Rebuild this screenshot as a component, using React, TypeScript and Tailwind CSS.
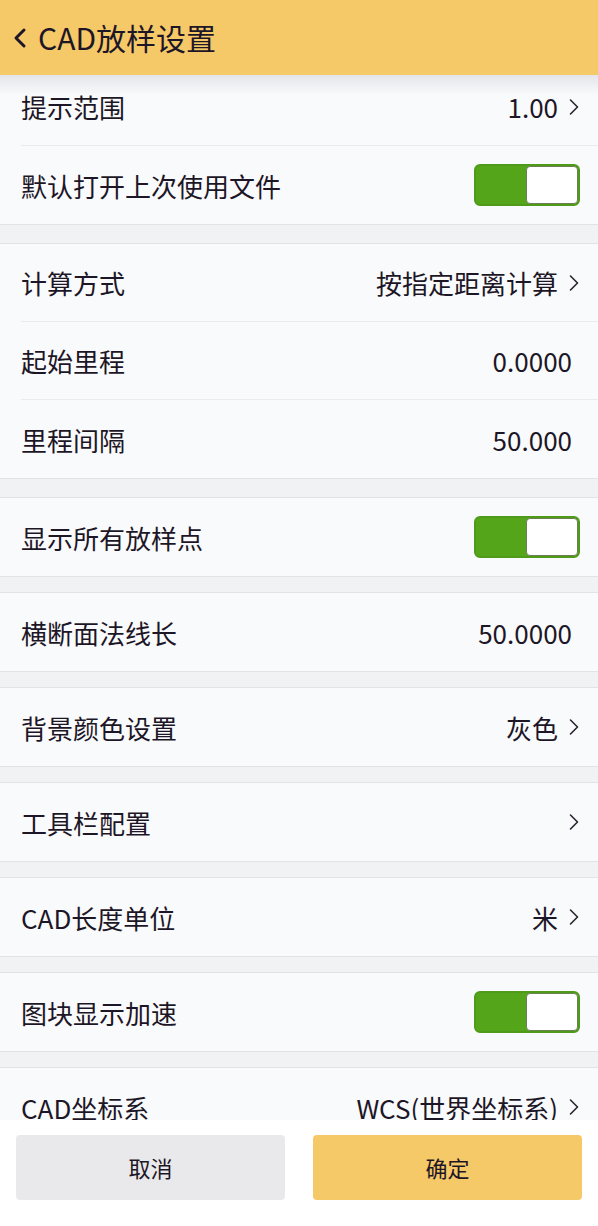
import React from "react";

type Row = {
  label: string;
  value?: string;
  arrow?: boolean;
  toggle?: boolean;
};

const groups: Row[][] = [
  [
    { label: "提示范围", value: "1.00", arrow: true },
    { label: "默认打开上次使用文件", toggle: true },
  ],
  [
    { label: "计算方式", value: "按指定距离计算", arrow: true },
    { label: "起始里程", value: "0.0000" },
    { label: "里程间隔", value: "50.000" },
  ],
  [{ label: "显示所有放样点", toggle: true }],
  [{ label: "横断面法线长", value: "50.0000" }],
  [{ label: "背景颜色设置", value: "灰色", arrow: true }],
  [{ label: "工具栏配置", arrow: true }],
  [{ label: "CAD长度单位", value: "米", arrow: true }],
  [{ label: "图块显示加速", toggle: true }],
  [{ label: "CAD坐标系", value: "WCS(世界坐标系)", arrow: true }],
];

// spacing above each group
const gapClass = ["", "mt-[18px]", "mt-[18px]", "mt-[15px]", "mt-[15px]", "mt-[15px]", "mt-[15px]", "mt-[15px]", "mt-[15px]"];

function Chevron() {
  return (
    <svg width="12" height="18" viewBox="0 0 12 18" className="ml-[10px] shrink-0">
      <path d="M2.5 2 L9.5 9 L2.5 16" fill="none" stroke="#2a2430" strokeWidth="1.6" strokeLinecap="round" strokeLinejoin="round" />
    </svg>
  );
}

function Toggle() {
  return (
    <div className="flex h-[42px] w-[106px] overflow-hidden rounded-[6px] border-2 border-[#4f9a18] bg-[#54a51a]">
      <div className="w-[50px] bg-[#54a51a]" />
      <div className="flex-1 rounded-[4px] border border-[#6d7f55] bg-white" />
    </div>
  );
}

function SettingRow({ row, last }: { row: Row; last: boolean }) {
  return (
    <div className="pl-[21px]">
      <div
        className={
          "flex h-[78px] items-center pr-[18px] " +
          (last ? "" : "border-b border-[#e9ebef]")
        }
      >
        <span className="flex-1 text-[26px] text-[#1d1626]">{row.label}</span>
        {row.value && <span className="text-[26px] text-[#1d1626]">{row.value}</span>}
        {row.arrow && <Chevron />}
        {row.toggle && <Toggle />}
        {!row.arrow && !row.toggle && <span className="w-[8px]" />}
      </div>
    </div>
  );
}

export default function App() {
  return (
    <div
      className="flex h-[1226px] w-[598px] flex-col overflow-hidden bg-white"
      style={{ fontFamily: '"Noto Sans CJK SC", "Noto Sans", sans-serif' }}
    >
      {/* header */}
      <div className="flex h-[75px] shrink-0 items-center bg-[#f5c868] pl-[12px]">
        <svg width="18" height="22" viewBox="0 0 18 22" className="mr-[8px]">
          <path d="M12 3 L4 11 L12 19" fill="none" stroke="#1d1626" strokeWidth="3" strokeLinecap="round" strokeLinejoin="round" />
        </svg>
        <span className="text-[30px] text-[#1d1626]">CAD放样设置</span>
      </div>

      {/* list */}
      <div className="relative flex-1 overflow-hidden bg-[#f1f2f4]">
        <div className="pointer-events-none absolute inset-x-0 top-0 z-10 h-[20px] bg-gradient-to-b from-[#e4e5e8] to-transparent" />
        <div className="mt-[-7px] flex flex-col">
          {groups.map((g, gi) => (
            <div
              key={gi}
              className={
                "bg-[#f9fafc] " +
                gapClass[gi] +
                " " +
                (gi === 0 ? "border-b" : "border-y") +
                " border-[#e2e3e6]"
              }
            >
              {g.map((r, ri) => (
                <SettingRow key={r.label} row={r} last={ri === g.length - 1} />
              ))}
            </div>
          ))}
        </div>
      </div>

      {/* footer */}
      <div className="flex h-[106px] shrink-0 gap-[28px] bg-white px-[16px] pt-[15px]">
        <button className="h-[65px] flex-1 rounded-[4px] bg-[#e9e9eb] text-[22px] text-[#1d1626]">
          取消
        </button>
        <button className="h-[65px] flex-1 rounded-[4px] bg-[#f5c868] text-[22px] text-[#1d1626]">
          确定
        </button>
      </div>
    </div>
  );
}
